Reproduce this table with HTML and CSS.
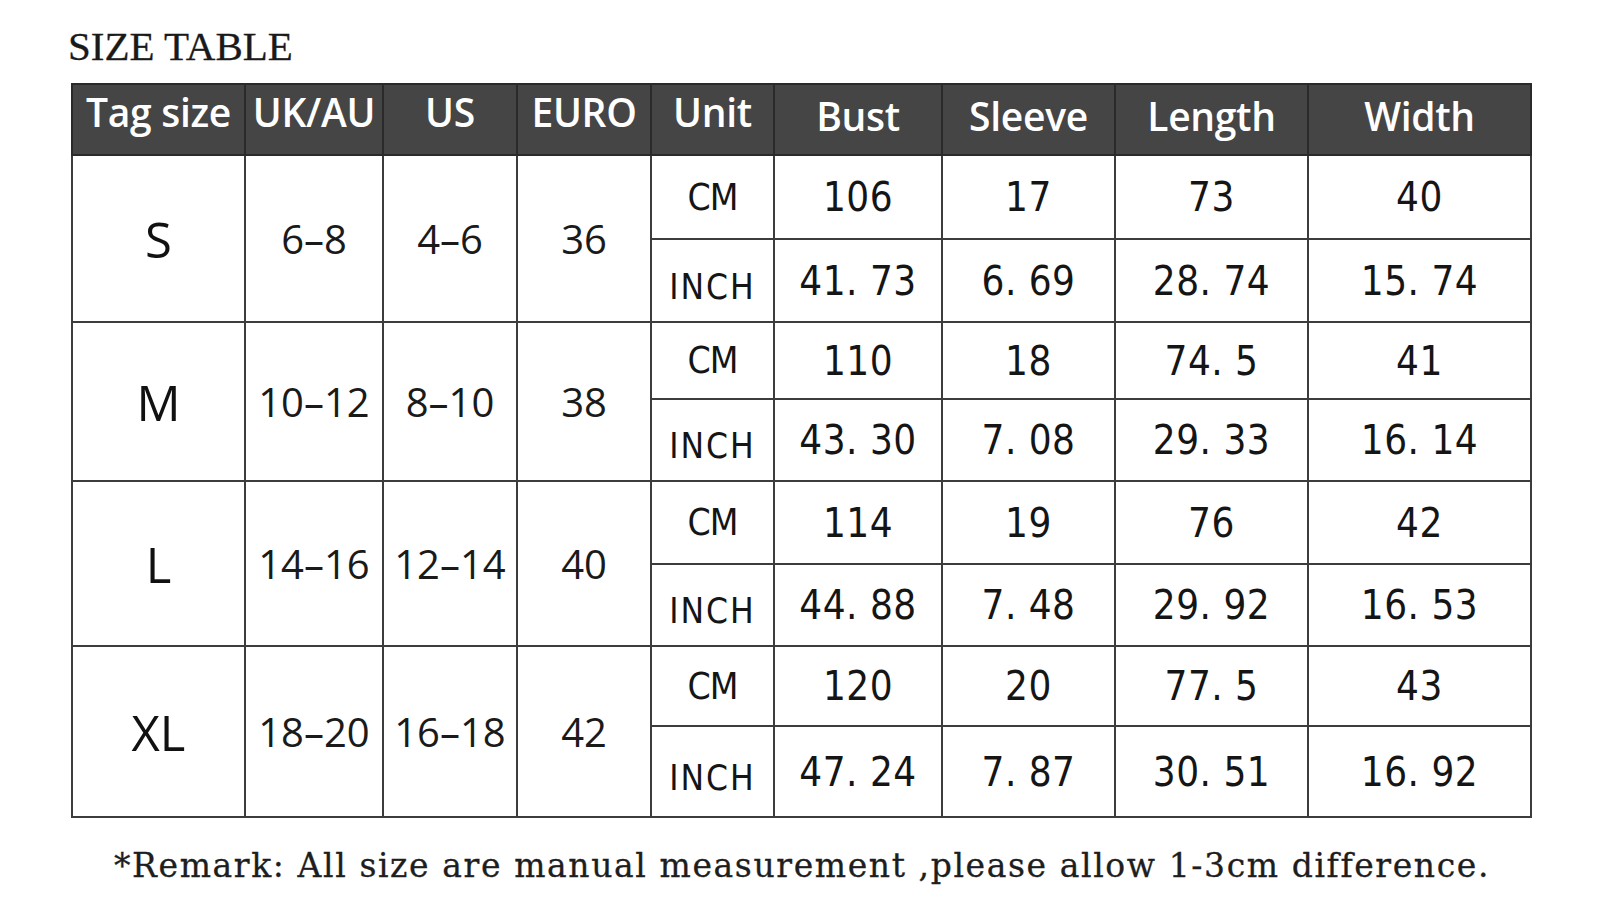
FILE: index.html
```html
<!DOCTYPE html>
<html lang="en">
<head>
<meta charset="utf-8">
<title>Size Table</title>
<link rel="stylesheet" href="styles.css">
</head>
<body>
<div class="page">
  <h1 class="title">SIZE TABLE</h1>
  <table class="size-table">
    <colgroup>
      <col class="c-tag"><col class="c-uk"><col class="c-us"><col class="c-euro"><col class="c-unit">
      <col class="c-bust"><col class="c-sleeve"><col class="c-length"><col class="c-width">
    </colgroup>
    <thead>
      <tr class="head">
        <th>Tag size</th><th>UK/AU</th><th>US</th><th>EURO</th><th>Unit</th>
        <th class="low">Bust</th><th class="low">Sleeve</th><th class="low">Length</th><th class="low">Width</th>
      </tr>
    </thead>
    <tbody>
      <tr class="r-s1">
        <td rowspan="2" class="size">S</td><td rowspan="2" class="std">6–8</td><td rowspan="2" class="std">4–6</td><td rowspan="2" class="std">36</td>
        <td class="unit">CM</td><td class="m">106</td><td class="m">17</td><td class="m">73</td><td class="m">40</td>
      </tr>
      <tr class="r-s2">
        <td class="unit inch">INCH</td><td class="m">41. 73</td><td class="m">6. 69</td><td class="m">28. 74</td><td class="m">15. 74</td>
      </tr>
      <tr class="r-m1">
        <td rowspan="2" class="size size-m">M</td><td rowspan="2" class="std std-m">10–12</td><td rowspan="2" class="std std-m">8–10</td><td rowspan="2" class="std std-m">38</td>
        <td class="unit">CM</td><td class="m">110</td><td class="m">18</td><td class="m">74. 5</td><td class="m">41</td>
      </tr>
      <tr class="r-m2">
        <td class="unit inch">INCH</td><td class="m">43. 30</td><td class="m">7. 08</td><td class="m">29. 33</td><td class="m">16. 14</td>
      </tr>
      <tr class="r-l1">
        <td rowspan="2" class="size size-l">L</td><td rowspan="2" class="std std-l">14–16</td><td rowspan="2" class="std std-l">12–14</td><td rowspan="2" class="std std-l">40</td>
        <td class="unit">CM</td><td class="m">114</td><td class="m">19</td><td class="m">76</td><td class="m">42</td>
      </tr>
      <tr class="r-l2">
        <td class="unit inch">INCH</td><td class="m">44. 88</td><td class="m">7. 48</td><td class="m">29. 92</td><td class="m">16. 53</td>
      </tr>
      <tr class="r-x1">
        <td rowspan="2" class="size">XL</td><td rowspan="2" class="std">18–20</td><td rowspan="2" class="std">16–18</td><td rowspan="2" class="std">42</td>
        <td class="unit">CM</td><td class="m">120</td><td class="m">20</td><td class="m">77. 5</td><td class="m">43</td>
      </tr>
      <tr class="r-x2">
        <td class="unit inch">INCH</td><td class="m">47. 24</td><td class="m">7. 87</td><td class="m">30. 51</td><td class="m">16. 92</td>
      </tr>
    </tbody>
  </table>
  <p class="remark">*Remark: All size are manual measurement ,please allow 1-3cm difference.</p>
</div>
</body>
</html>
```
FILE: styles.css
```css
html, body {
  margin: 0;
  padding: 0;
  background: #ffffff;
}

.page {
  padding: 26px 0 0 71px;
  width: 1462px;
}

.title {
  margin: 0 0 0 -3px;
  font-family: "Liberation Serif", serif;
  font-weight: 400;
  font-size: 41px;
  line-height: 1;
  color: #1a1a1a;
  -webkit-text-stroke: 0.3px #1a1a1a;
}

.size-table {
  margin-top: 16px;
  border-collapse: collapse;
  table-layout: fixed;
  width: 1459px;
}

.c-tag { width: 173px; }
.c-uk { width: 138px; }
.c-us { width: 134px; }
.c-euro { width: 134px; }
.c-unit { width: 123px; }
.c-bust { width: 168px; }
.c-sleeve { width: 173px; }
.c-length { width: 193px; }
.c-width { width: 223px; }

.size-table th,
.size-table td {
  border: 2px solid #3c3c3c;
  padding: 0;
  text-align: center;
  vertical-align: middle;
  white-space: nowrap;
}

.head {
  height: 70px;
  background: #454545;
}

.head th {
  color: #ffffff;
  font-family: "Open Sans", sans-serif;
  font-weight: 600;
  font-size: 39px;
  letter-spacing: -0.3px;
  padding-bottom: 16px;
  border-color: #2a2a2a;
}

.head th.low {
  padding-bottom: 9px;
}

.r-s1 { height: 84px; }
.r-s2 { height: 83px; }
.r-m1 { height: 77px; }
.r-m2 { height: 82px; }
.r-l1 { height: 83px; }
.r-l2 { height: 82px; }
.r-x1 { height: 80px; }
.r-x2 { height: 91px; }

.size {
  font-family: "Open Sans", sans-serif;
  font-size: 49px;
  font-weight: 400;
  color: #111;
}

.std {
  font-family: "Open Sans", sans-serif;
  font-size: 40px;
  font-weight: 400;
  color: #1a1a1a;
}

.size-m { padding-top: 36px; }
.std-m { padding-top: 26px; }
.size-l { padding-top: 44px; }
.std-l { padding-top: 36px; }

.unit,
.m {
  font-family: "DejaVu Sans", sans-serif;
  font-stretch: condensed;
  color: #151515;
}

.unit {
  font-size: 37px;
  letter-spacing: -1px;
  padding-top: 8px;
}

.unit.inch {
  font-size: 35px;
  letter-spacing: 2px;
  padding-top: 12px;
}

.m {
  font-size: 40px;
  letter-spacing: 0.5px;
  padding-top: 10px;
}

.remark {
  margin: 28px 0 0 0;
  text-align: center;
  font-family: "DejaVu Serif", serif;
  font-size: 33px;
  letter-spacing: 1.6px;
  color: #1e1e1e;
  -webkit-text-stroke: 0.3px #1e1e1e;
}
```
